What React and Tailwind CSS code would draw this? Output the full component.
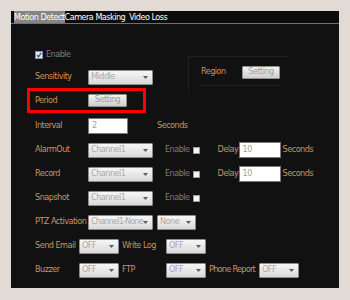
import React from "react";

const font = { fontFamily: "'DejaVu Sans Condensed', Lato, 'Liberation Sans', sans-serif" };

const Label = ({ children, className = "" }) => (
  <span className={`text-[#cc965e] whitespace-nowrap ${className}`}>{children}</span>
);

const Muted = ({ children, className = "" }) => (
  <span className={`text-[#7d7d7d] whitespace-nowrap ${className}`}>{children}</span>
);

const Select = ({ value, className = "" }) => (
  <div
    className={`flex items-center justify-between h-[15px] pl-[2px] pr-[4px] border border-[#8c8c8c] rounded-[1px] bg-gradient-to-b from-[#f7f7f7] to-[#d9d9d9] text-[#a9a9a9] ${className}`}
  >
    <span className="whitespace-nowrap">{value}</span>
    <svg width="5" height="3" viewBox="0 0 5 3" className="shrink-0">
      <path d="M0 0h5L2.5 3z" fill="#5a5a5a" />
    </svg>
  </div>
);

const Button = ({ className = "" }) => (
  <div
    className={`flex items-center justify-center h-[13px] border border-[#8f8f8f] rounded-[1px] bg-gradient-to-b from-[#f2f2f2] to-[#cfcfcf] text-[#9d9d9d] ${className}`}
  >
    Setting
  </div>
);

const Input = ({ value, className = "" }) => (
  <div className={`flex items-center h-[16px] pl-[3px] bg-white border border-[#7a7a7a] text-[#a0a0a0] ${className}`}>
    {value}
  </div>
);

const Check = ({ checked, className = "" }) =>
  checked ? (
    <svg width="8" height="8" viewBox="0 0 8 8" className={`shrink-0 ${className}`}>
      <rect x="0.5" y="0.5" width="7" height="7" fill="#dfe3ee" stroke="#8a8fa0" />
      <path d="M2 4.2l1.5 1.5L6.2 2" fill="none" stroke="#3d5a9c" strokeWidth="1.3" />
    </svg>
  ) : (
    <div className={`w-[7px] h-[7px] shrink-0 bg-[#f4f4f4] border border-[#9a9a9a] ${className}`} />
  );

const Row = ({ children, className = "" }) => (
  <div className={`flex items-center h-[24px] pl-[24px] ${className}`}>{children}</div>
);

const Alarm = ({ label }) => (
  <Row>
    <Label className="w-[53px]">{label}</Label>
    <Select value="Channel1" className="w-[65px]" />
    <Muted className="ml-[12px]">Enable</Muted>
    <Check className="ml-[3px]" />
    <Label className="ml-[18px] w-[21px]">Delay</Label>
    <Input value="10" className="w-[42px]" />
    <Label className="ml-[2px]">Seconds</Label>
  </Row>
);

export default function App() {
  return (
    <div className="w-[350px] h-[300px] bg-[#e2dad4] pt-[11px] pl-[11px]" style={font}>
      <div className="w-[328px] h-[277px] bg-[#111111] text-[9px] tracking-[-0.5px] flex flex-col">
        {/* tabs */}
        <div className="flex items-stretch h-[13px] pl-[3px] bg-[#0b0b0b] border-b border-[#707070] text-white leading-none">
          <div className="bg-[#858585] flex items-center whitespace-nowrap">Motion Detect</div>
          <div className="pr-[4px] flex items-center whitespace-nowrap">Camera Masking</div>
          <div className="flex items-center whitespace-nowrap">Video Loss</div>
        </div>

        <div className="h-[20px]" />

        {/* enable + sensitivity + region */}
        <div className="flex items-start h-[44px]">
          <div className="flex flex-col">
            <div className="flex items-center h-[22px] pl-[24px] gap-[3px]">
              <Check checked />
              <Muted>Enable</Muted>
            </div>
            <div className="flex items-center h-[22px] pl-[24px]">
              <Label className="w-[53px]">Sensitivity</Label>
              <Select value="Middle" className="w-[65px]" />
            </div>
          </div>
          <div className="ml-[35px] mt-[12px] w-[100px] h-[34px] border-t border-l border-[#1d231d] flex flex-col">
            <div className="flex items-center h-[28px] pl-[12px] pt-[2px]">
              <Label className="w-[41px]">Region</Label>
              <Button className="w-[38px]" />
            </div>
            <div className="ml-[9px] w-[83px] border-b border-[#1d231d]" />
          </div>
        </div>

        {/* period */}
        <div className="ml-[16px] w-[119px] h-[25px] border-[3px] border-[#ff0000] flex items-center pl-[5px]">
          <Label className="w-[53px]">Period</Label>
          <Button className="w-[39px] -mt-[1px]" />
        </div>

        <Row className="h-[25px]">
          <Label className="w-[53px]">Interval</Label>
          <Input value="2" className="w-[40px]" />
          <Label className="ml-[29px]">Seconds</Label>
        </Row>

        <Alarm label="AlarmOut" />
        <Alarm label="Record" />

        <Row>
          <Label className="w-[53px]">Snapshot</Label>
          <Select value="Channel1" className="w-[65px]" />
          <Muted className="ml-[12px]">Enable</Muted>
          <Check className="ml-[3px]" />
        </Row>

        <Row>
          <Label className="w-[53px]">PTZ Activation</Label>
          <Select value="Channel1-None" className="w-[65px] pl-[1px] pr-[2px] tracking-[-0.8px]" />
          <Select value="None" className="ml-[4px] w-[39px]" />
        </Row>

        <Row>
          <Label className="w-[44px]">Send Email</Label>
          <Select value="OFF" className="w-[40px]" />
          <Label className="ml-[3px] w-[44px]">Write Log</Label>
          <Select value="OFF" className="w-[40px]" />
        </Row>

        <Row>
          <Label className="w-[44px]">Buzzer</Label>
          <Select value="OFF" className="w-[40px]" />
          <Label className="ml-[3px] w-[44px]">FTP</Label>
          <Select value="OFF" className="w-[40px]" />
          <Label className="ml-[3px] w-[50px] tracking-[-0.7px]">Phone Report</Label>
          <Select value="OFF" className="w-[40px]" />
        </Row>
      </div>
    </div>
  );
}
